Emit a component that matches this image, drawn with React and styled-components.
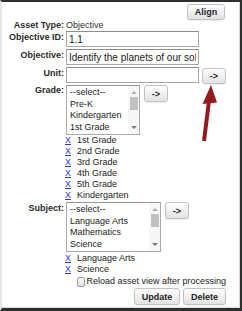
import React from "react";
import styled, { createGlobalStyle } from "styled-components";

const GlobalStyle = createGlobalStyle`
  body {
    margin: 0;
    background: #fff;
    font-family: "Liberation Sans", Arial, sans-serif;
  }
`;

const Frame = styled.div`
  position: relative;
  width: 242px;
  height: 311px;
  box-sizing: border-box;
  border-top: 2px solid #2f2f2f;
  border-right: 2px solid #2f2f2f;
  border-bottom: 3px solid #2f2f2f;
  border-left: 2px solid #e6e6e6;
  background: #fff;
`;

const Panel = styled.div`
  height: 100%;
  box-sizing: border-box;
  border-right: 1px solid #d9d9d9;
  border-bottom: 1px solid #dcdcdc;
  padding: 2px 13px 0 0;
`;

const TopBar = styled.div`
  display: flex;
  justify-content: flex-end;
  padding-right: 1px;
`;

const Form = styled.div`
  display: grid;
  grid-template-columns: 62px 160px;
  column-gap: 2px;
  align-items: start;
`;

const Label = styled.div`
  text-align: right;
  font-size: 9px;
  font-weight: bold;
  line-height: 11px;
  color: #2b2b2b;
  padding-top: ${({ $pad }) => $pad ?? 1}px;
  white-space: nowrap;
`;

const Value = styled.div`
  font-size: 9px;
  line-height: 11px;
  color: #333;
`;

const Cell = styled.div`
  grid-column: 2;
  display: flex;
  align-items: flex-start;
  gap: ${({ $gap }) => $gap ?? 3}px;
  margin-top: ${({ $mt }) => $mt ?? 0}px;
  justify-content: ${({ $end }) => ($end ? "flex-end" : "flex-start")};
`;

const TextInput = styled.input`
  width: 133px;
  height: 16px;
  box-sizing: border-box;
  margin: 0;
  border: 1px solid #a8a8a8;
  border-top-color: #8c8c8c;
  padding: 0 2px;
  font-family: "Liberation Sans", Arial, sans-serif;
  font-size: 10px;
  color: #222;
  background: #fff;
  outline: none;
`;

const Button = styled.button`
  width: ${({ $w }) => $w}px;
  height: ${({ $h }) => $h ?? 16}px;
  margin: 0;
  margin-top: ${({ $mt }) => $mt ?? 0}px;
  padding: 0;
  box-sizing: border-box;
  font-family: "Liberation Sans", Arial, sans-serif;
  font-size: 9px;
  font-weight: bold;
  color: #262626;
  background: linear-gradient(#fefefe, #e2e2e2);
  border: 1px solid #c2c2c2;
  border-radius: 3px;
  box-shadow: 0 1px 1px rgba(0, 0, 0, 0.08);
`;

const ListBox = styled.div`
  display: flex;
  width: ${({ $w }) => $w}px;
  height: 50px;
  box-sizing: border-box;
  border: 1px solid #aaa;
  border-top-color: #939393;
  background: #fff;
`;

const Options = styled.div`
  flex: 1;
  padding: 1px 3px 0;
  overflow: hidden;
  white-space: nowrap;
  font-size: 9px;
  line-height: 11.5px;
  color: #1c1c1c;
`;

const ScrollBar = styled.div`
  width: 11px;
  display: flex;
  flex-direction: column;
  align-items: center;
  background: #f7f7f7;
`;

const Arrow = styled.div`
  width: 0;
  height: 0;
  margin: ${({ $down }) => ($down ? "0 0 5px" : "5px 0 0")};
  border-left: 3px solid transparent;
  border-right: 3px solid transparent;
  ${({ $down }) =>
    $down ? "border-top: 3px solid #7a7a7a;" : "border-bottom: 3px solid #b0b0b0;"}
`;

const Thumb = styled.div`
  width: 8px;
  height: 13px;
  margin-top: 3px;
  background: #c1c1c1;
`;

const Spacer = styled.div`
  flex: 1;
`;

const Chosen = styled.div`
  grid-column: 2;
  margin-top: ${({ $mt }) => $mt ?? 0}px;
`;

const ChosenRow = styled.div`
  display: flex;
  gap: 6px;
  margin-left: -1px;
  font-size: 9px;
  line-height: 11px;
  color: #222;
`;

const RemoveLink = styled.a`
  color: #2f2fff;
  text-decoration: underline;
  cursor: pointer;
`;

const CheckRow = styled.label`
  grid-column: 2;
  display: flex;
  align-items: center;
  gap: 1px;
  margin-top: 1px;
  padding-left: 11px;
  font-size: 9px;
  line-height: 11px;
  color: #222;
  white-space: nowrap;
`;

const CheckBox = styled.input`
  appearance: none;
  width: 10px;
  height: 10px;
  margin: 0;
  box-sizing: border-box;
  border: 1px solid #9a9a9a;
  border-radius: 2px;
  background: linear-gradient(#fafafa, #dedede);
`;

const Annotation = styled.svg`
  position: absolute;
  left: -2px;
  top: -2px;
  pointer-events: none;
`;

const Select = ({ width, items }) => (
  <ListBox $w={width}>
    <Options>
      {items.map((item) => (
        <div key={item}>{item}</div>
      ))}
    </Options>
    <ScrollBar>
      <Arrow />
      <Thumb />
      <Spacer />
      <Arrow $down />
    </ScrollBar>
  </ListBox>
);

const ChosenList = ({ items, mt }) => (
  <Chosen $mt={mt}>
    {items.map((item) => (
      <ChosenRow key={item}>
        <RemoveLink>X</RemoveLink>
        <span>{item}</span>
      </ChosenRow>
    ))}
  </Chosen>
);

const grades = ["1st Grade", "2nd Grade", "3rd Grade", "4th Grade", "5th Grade", "Kindergarten"];

export default function App() {
  return (
    <>
      <GlobalStyle />
      <Frame>
        <Panel>
          <TopBar>
            <Button $w={38}>Align</Button>
          </TopBar>
          <Form>
            <Label $pad={0}>Asset Type:</Label>
            <Value>Objective</Value>

            <Label>Objective ID:</Label>
            <Cell>
              <TextInput readOnly defaultValue="1.1" />
            </Cell>

            <Label $pad={3}>Objective:</Label>
            <Cell $mt={2}>
              <TextInput readOnly defaultValue="Identify the planets of our solar system" />
            </Cell>

            <Label $pad={3}>Unit:</Label>
            <Cell $mt={2}>
              <TextInput readOnly defaultValue="" />
              <Button $w={24} $mt={1}>-&gt;</Button>
            </Cell>

            <Label $pad={1}>Grade:</Label>
            <Cell $mt={1} $gap={4}>
              <Select width={74} items={["--select--", "Pre-K", "Kindergarten", "1st Grade"]} />
              <Button $w={24} $h={17}>-&gt;</Button>
            </Cell>

            <ChosenList items={grades} />

            <Label $pad={2}>Subject:</Label>
            <Cell $mt={1} $gap={4}>
              <Select width={95} items={["--select--", "Language Arts", "Mathematics", "Science"]} />
              <Button $w={24} $h={17}>-&gt;</Button>
            </Cell>

            <ChosenList items={["Language Arts", "Science"]} mt={1} />

            <CheckRow>
              <CheckBox type="checkbox" />
              Reload asset view after processing
            </CheckRow>

            <Cell $mt={1} $end>
              <Button $w={46} $h={17}>Update</Button>
              <Button $w={43} $h={17}>Delete</Button>
            </Cell>
          </Form>
        </Panel>
        <Annotation width="242" height="311" viewBox="0 0 242 311">
          <line x1="204" y1="141" x2="209" y2="101" stroke="#921b1f" strokeWidth="4" />
          <polygon points="211,85 202.5,104 217,102.5" fill="#921b1f" />
        </Annotation>
      </Frame>
    </>
  );
}
